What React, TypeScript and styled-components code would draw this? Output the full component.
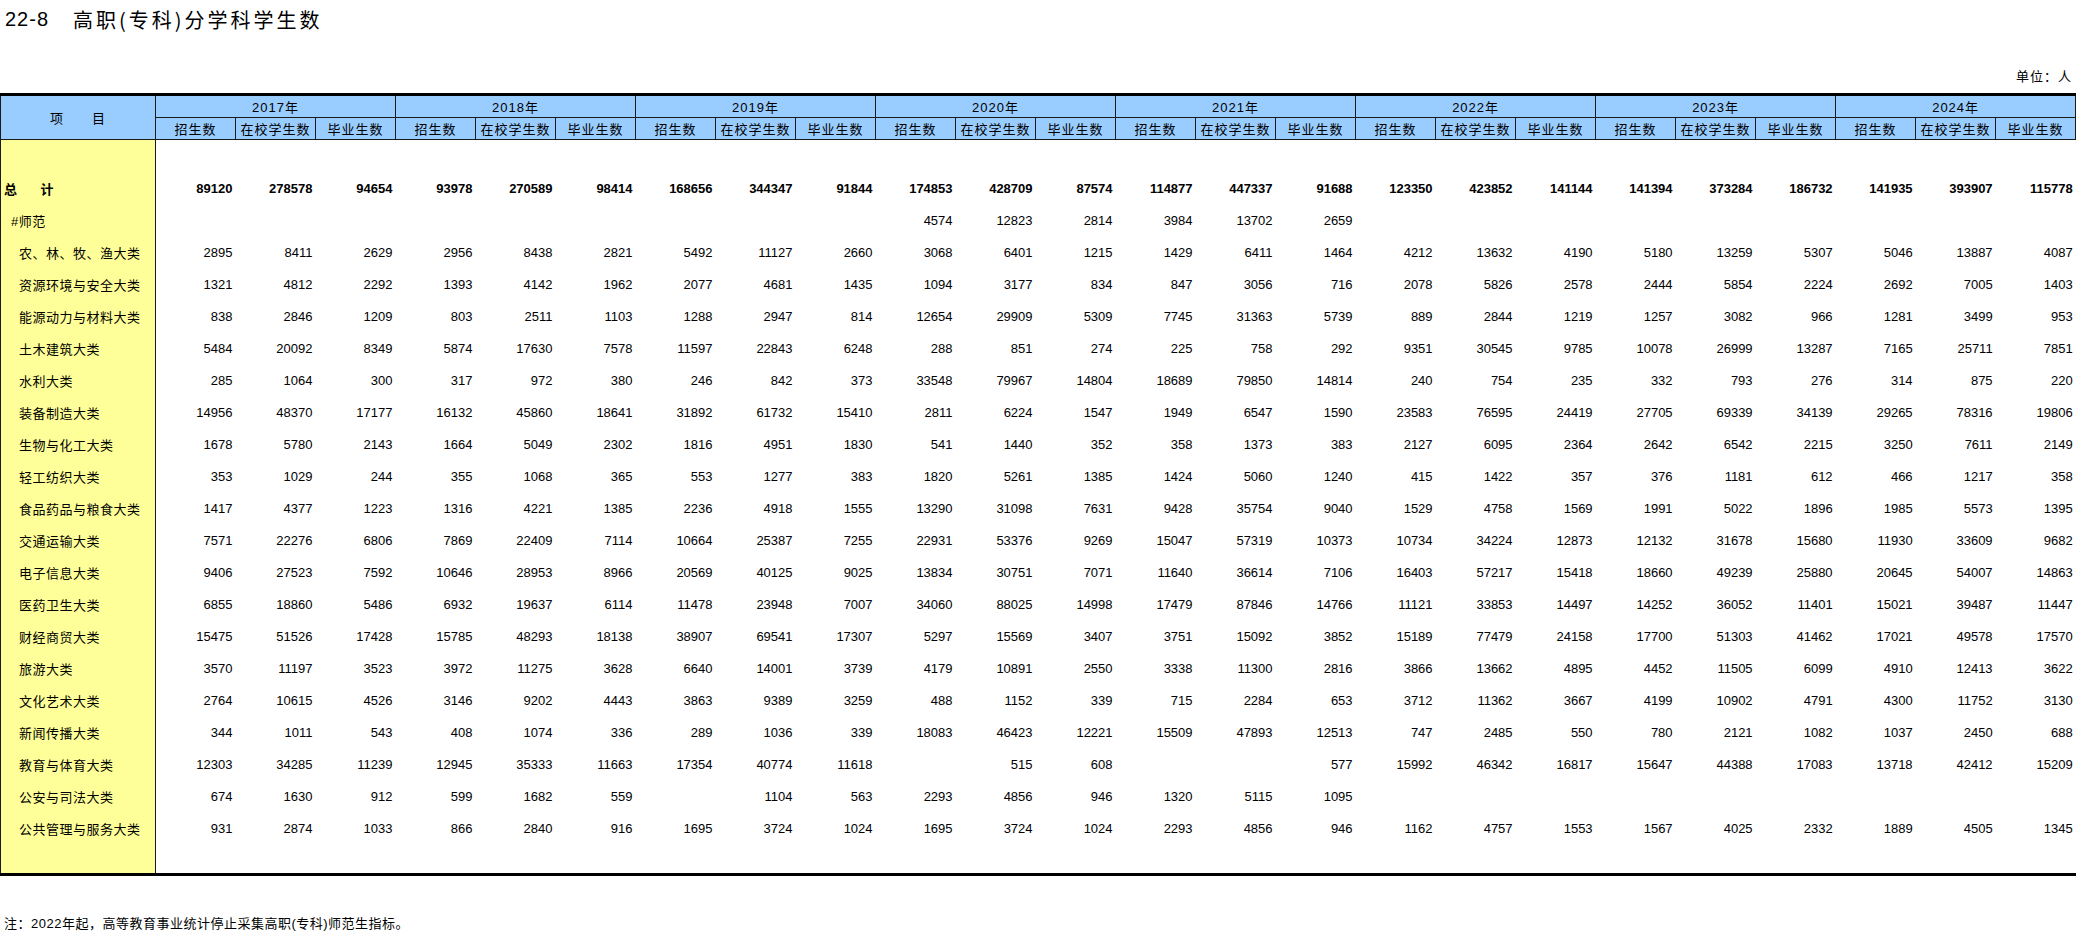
import React from 'react'
import styled, { createGlobalStyle } from 'styled-components'

type RowKind = 'total' | 'sub' | 'item'

type RowType = {
  name: string
  kind: RowKind
  values: (number | null)[]
}

const years = ['2017年', '2018年', '2019年', '2020年', '2021年', '2022年', '2023年', '2024年']
const subHeads = ['招生数', '在校学生数', '毕业生数']

const _ = null

const rows: RowType[] = [
  {
    name: '总 计',
    kind: 'total',
    values: [89120, 278578, 94654, 93978, 270589, 98414, 168656, 344347, 91844, 174853, 428709, 87574, 114877, 447337, 91688, 123350, 423852, 141144, 141394, 373284, 186732, 141935, 393907, 115778],
  },
  {
    name: '#师范',
    kind: 'sub',
    values: [_, _, _, _, _, _, _, _, _, 4574, 12823, 2814, 3984, 13702, 2659, _, _, _, _, _, _, _, _, _],
  },
  { name: '农、林、牧、渔大类', kind: 'item', values: [2895, 8411, 2629, 2956, 8438, 2821, 5492, 11127, 2660, 3068, 6401, 1215, 1429, 6411, 1464, 4212, 13632, 4190, 5180, 13259, 5307, 5046, 13887, 4087] },
  { name: '资源环境与安全大类', kind: 'item', values: [1321, 4812, 2292, 1393, 4142, 1962, 2077, 4681, 1435, 1094, 3177, 834, 847, 3056, 716, 2078, 5826, 2578, 2444, 5854, 2224, 2692, 7005, 1403] },
  { name: '能源动力与材料大类', kind: 'item', values: [838, 2846, 1209, 803, 2511, 1103, 1288, 2947, 814, 12654, 29909, 5309, 7745, 31363, 5739, 889, 2844, 1219, 1257, 3082, 966, 1281, 3499, 953] },
  { name: '土木建筑大类', kind: 'item', values: [5484, 20092, 8349, 5874, 17630, 7578, 11597, 22843, 6248, 288, 851, 274, 225, 758, 292, 9351, 30545, 9785, 10078, 26999, 13287, 7165, 25711, 7851] },
  { name: '水利大类', kind: 'item', values: [285, 1064, 300, 317, 972, 380, 246, 842, 373, 33548, 79967, 14804, 18689, 79850, 14814, 240, 754, 235, 332, 793, 276, 314, 875, 220] },
  { name: '装备制造大类', kind: 'item', values: [14956, 48370, 17177, 16132, 45860, 18641, 31892, 61732, 15410, 2811, 6224, 1547, 1949, 6547, 1590, 23583, 76595, 24419, 27705, 69339, 34139, 29265, 78316, 19806] },
  { name: '生物与化工大类', kind: 'item', values: [1678, 5780, 2143, 1664, 5049, 2302, 1816, 4951, 1830, 541, 1440, 352, 358, 1373, 383, 2127, 6095, 2364, 2642, 6542, 2215, 3250, 7611, 2149] },
  { name: '轻工纺织大类', kind: 'item', values: [353, 1029, 244, 355, 1068, 365, 553, 1277, 383, 1820, 5261, 1385, 1424, 5060, 1240, 415, 1422, 357, 376, 1181, 612, 466, 1217, 358] },
  { name: '食品药品与粮食大类', kind: 'item', values: [1417, 4377, 1223, 1316, 4221, 1385, 2236, 4918, 1555, 13290, 31098, 7631, 9428, 35754, 9040, 1529, 4758, 1569, 1991, 5022, 1896, 1985, 5573, 1395] },
  { name: '交通运输大类', kind: 'item', values: [7571, 22276, 6806, 7869, 22409, 7114, 10664, 25387, 7255, 22931, 53376, 9269, 15047, 57319, 10373, 10734, 34224, 12873, 12132, 31678, 15680, 11930, 33609, 9682] },
  { name: '电子信息大类', kind: 'item', values: [9406, 27523, 7592, 10646, 28953, 8966, 20569, 40125, 9025, 13834, 30751, 7071, 11640, 36614, 7106, 16403, 57217, 15418, 18660, 49239, 25880, 20645, 54007, 14863] },
  { name: '医药卫生大类', kind: 'item', values: [6855, 18860, 5486, 6932, 19637, 6114, 11478, 23948, 7007, 34060, 88025, 14998, 17479, 87846, 14766, 11121, 33853, 14497, 14252, 36052, 11401, 15021, 39487, 11447] },
  { name: '财经商贸大类', kind: 'item', values: [15475, 51526, 17428, 15785, 48293, 18138, 38907, 69541, 17307, 5297, 15569, 3407, 3751, 15092, 3852, 15189, 77479, 24158, 17700, 51303, 41462, 17021, 49578, 17570] },
  { name: '旅游大类', kind: 'item', values: [3570, 11197, 3523, 3972, 11275, 3628, 6640, 14001, 3739, 4179, 10891, 2550, 3338, 11300, 2816, 3866, 13662, 4895, 4452, 11505, 6099, 4910, 12413, 3622] },
  { name: '文化艺术大类', kind: 'item', values: [2764, 10615, 4526, 3146, 9202, 4443, 3863, 9389, 3259, 488, 1152, 339, 715, 2284, 653, 3712, 11362, 3667, 4199, 10902, 4791, 4300, 11752, 3130] },
  { name: '新闻传播大类', kind: 'item', values: [344, 1011, 543, 408, 1074, 336, 289, 1036, 339, 18083, 46423, 12221, 15509, 47893, 12513, 747, 2485, 550, 780, 2121, 1082, 1037, 2450, 688] },
  { name: '教育与体育大类', kind: 'item', values: [12303, 34285, 11239, 12945, 35333, 11663, 17354, 40774, 11618, _, 515, 608, _, _, 577, 15992, 46342, 16817, 15647, 44388, 17083, 13718, 42412, 15209] },
  { name: '公安与司法大类', kind: 'item', values: [674, 1630, 912, 599, 1682, 559, _, 1104, 563, 2293, 4856, 946, 1320, 5115, 1095, _, _, _, _, _, _, _, _, _] },
  { name: '公共管理与服务大类', kind: 'item', values: [931, 2874, 1033, 866, 2840, 916, 1695, 3724, 1024, 1695, 3724, 1024, 2293, 4856, 946, 1162, 4757, 1553, 1567, 4025, 2332, 1889, 4505, 1345] },
]

const App: React.FC = () => {
  return (
    <Page>
      <GlobalStyle />
      <Title>
        <TitleNo>22-8</TitleNo>
        高职(专科)分学科学生数
      </Title>
      <Unit>单位：人</Unit>
      <Sheet>
        <colgroup>
          <col style={{ width: 155 }} />
          {Array.from({ length: 24 }).map((_x, i) => (
            <col key={`col-${i}`} style={{ width: 80 }} />
          ))}
        </colgroup>
        <thead>
          <tr>
            <HeadCell rowSpan={2}>项{'\u3000\u3000'}目</HeadCell>
            {years.map((y) => (
              <HeadCell key={y} colSpan={3}>
                {y}
              </HeadCell>
            ))}
          </tr>
          <tr>
            {years.map((y) =>
              subHeads.map((s) => <HeadCell key={`${y}-${s}`}>{s}</HeadCell>)
            )}
          </tr>
        </thead>
        <tbody>
          <SpacerRow $h={33}>
            <LabelCell />
            <td colSpan={24} />
          </SpacerRow>
          {rows.map((row) => (
            <DataRow key={row.name}>
              <LabelCell $kind={row.kind}>{row.name}</LabelCell>
              {row.values.map((v, i) => (
                <NumCell key={`${row.name}-${i}`} $bold={row.kind === 'total'}>
                  {v ?? ''}
                </NumCell>
              ))}
            </DataRow>
          ))}
          <SpacerRow $h={30}>
            <LabelCell />
            <td colSpan={24} />
          </SpacerRow>
        </tbody>
      </Sheet>
      <Note>注：2022年起，高等教育事业统计停止采集高职(专科)师范生指标。</Note>
    </Page>
  )
}

const GlobalStyle = createGlobalStyle`
  html, body {
    margin: 0;
    padding: 0;
    background: #fff;
  }
  body {
    font-family: "Liberation Sans", "Noto Sans CJK SC", sans-serif;
    color: #000;
  }
`

const Page = styled.div`
  width: 2076px;
  overflow: hidden;
`

const Title = styled.div`
  display: flex;
  align-items: center;
  height: 38px;
  padding-left: 5px;
  font-size: 20px;
  letter-spacing: 3px;
  font-family: "Noto Sans CJK SC", "Liberation Sans", sans-serif;
`

const TitleNo = styled.span`
  font-family: "Liberation Sans", sans-serif;
  letter-spacing: 1px;
  margin-right: 24px;
`

const Unit = styled.div`
  margin-top: 30px;
  height: 18px;
  line-height: 18px;
  text-align: right;
  padding-right: 4px;
  font-size: 13px;
  letter-spacing: 1px;
`

const Sheet = styled.table`
  margin-top: 7px;
  width: 2075px;
  table-layout: fixed;
  border-collapse: collapse;
  border-top: 3px solid #000;
  border-bottom: 3px solid #000;
  font-size: 13px;
`

const HeadCell = styled.th`
  height: 21px;
  padding: 0;
  background: #99ccff;
  border: 1px solid #1a1a1a;
  border-top: none;
  font-weight: normal;
  text-align: center;
  white-space: nowrap;
  font-size: 13px;
  letter-spacing: 1px;

  &:first-child {
    border-left: 1px solid #1a1a1a;
  }
`

const SpacerRow = styled.tr<{ $h: number }>`
  height: ${(p) => p.$h}px;
`

const DataRow = styled.tr`
  height: 32px;
`

const LabelCell = styled.td<{ $kind?: RowKind }>`
  background: #ffff99;
  border-left: 1px solid #1a1a1a;
  border-right: 1px solid #1a1a1a;
  padding: 0 0 0
    ${(p) => (p.$kind === 'total' ? 3 : p.$kind === 'sub' ? 10 : 18)}px;
  white-space: pre;
  font-weight: ${(p) => (p.$kind === 'total' ? 'bold' : 'normal')};
  letter-spacing: ${(p) => (p.$kind === 'total' ? '10px' : '0.5px')};
  font-size: 13px;
`

const NumCell = styled.td<{ $bold?: boolean }>`
  padding: 0 3px 0 0;
  text-align: right;
  font-weight: ${(p) => (p.$bold ? 'bold' : 'normal')};
  font-size: 13px;
`

const Note = styled.div`
  margin-top: 39px;
  height: 18px;
  line-height: 18px;
  padding-left: 4px;
  font-size: 13px;
  letter-spacing: 0.5px;
`

export default App
